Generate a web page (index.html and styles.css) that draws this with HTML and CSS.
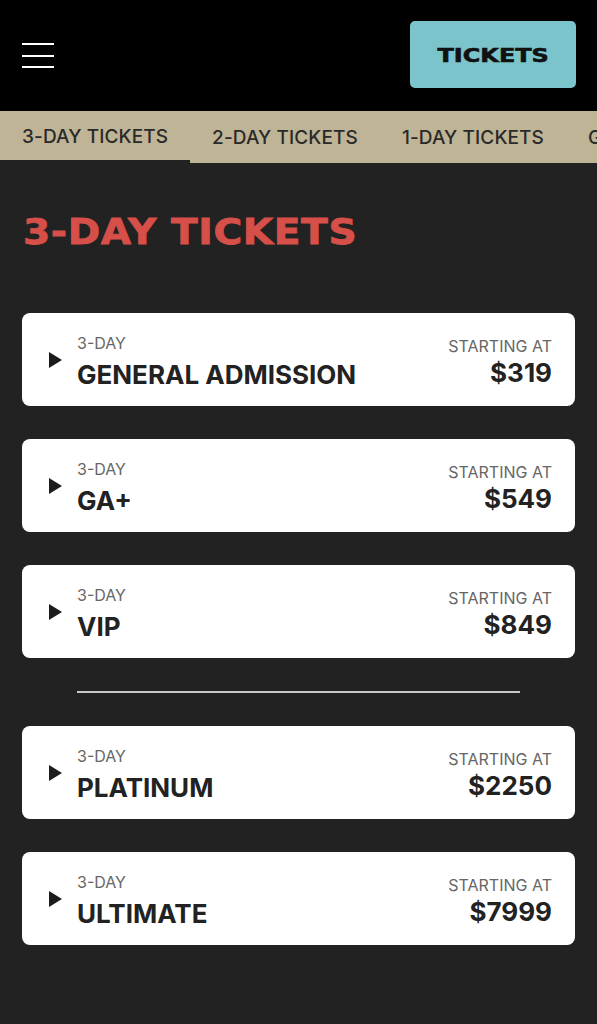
FILE: index.html
```html
<!DOCTYPE html>
<html lang="en">
<head>
    <meta charset="UTF-8">
    <meta name="viewport" content="width=device-width, initial-scale=1.0">
    <title>Tickets</title>
    <link rel="stylesheet" href="styles.css">
</head>
<body>
    <header class="top-bar">
        <button class="menu-btn" aria-label="Menu">
            <span></span><span></span><span></span>
        </button>
        <a class="tickets-btn" href="#"><span>TICKETS</span></a>
    </header>

    <nav class="tabs">
        <a class="tab active" href="#">3-DAY TICKETS</a>
        <a class="tab" href="#">2-DAY TICKETS</a>
        <a class="tab" href="#">1-DAY TICKETS</a>
        <a class="tab" href="#">GA+ ADD-ONS</a>
    </nav>

    <main class="content">
        <h1 class="section-title"><span>3-DAY TICKETS</span></h1>

        <div class="ticket-list">
            <div class="ticket">
                <span class="arrow"></span>
                <div class="ticket-name">
                    <div class="ticket-type">3-DAY</div>
                    <div class="ticket-title">GENERAL ADMISSION</div>
                </div>
                <div class="ticket-price">
                    <div class="price-label">STARTING AT</div>
                    <div class="price-value">$319</div>
                </div>
            </div>

            <div class="ticket">
                <span class="arrow"></span>
                <div class="ticket-name">
                    <div class="ticket-type">3-DAY</div>
                    <div class="ticket-title">GA+</div>
                </div>
                <div class="ticket-price">
                    <div class="price-label">STARTING AT</div>
                    <div class="price-value">$549</div>
                </div>
            </div>

            <div class="ticket">
                <span class="arrow"></span>
                <div class="ticket-name">
                    <div class="ticket-type">3-DAY</div>
                    <div class="ticket-title">VIP</div>
                </div>
                <div class="ticket-price">
                    <div class="price-label">STARTING AT</div>
                    <div class="price-value">$849</div>
                </div>
            </div>

            <hr class="divider">

            <div class="ticket">
                <span class="arrow"></span>
                <div class="ticket-name">
                    <div class="ticket-type">3-DAY</div>
                    <div class="ticket-title">PLATINUM</div>
                </div>
                <div class="ticket-price">
                    <div class="price-label">STARTING AT</div>
                    <div class="price-value">$2250</div>
                </div>
            </div>

            <div class="ticket">
                <span class="arrow"></span>
                <div class="ticket-name">
                    <div class="ticket-type">3-DAY</div>
                    <div class="ticket-title">ULTIMATE</div>
                </div>
                <div class="ticket-price">
                    <div class="price-label">STARTING AT</div>
                    <div class="price-value">$7999</div>
                </div>
            </div>
        </div>
    </main>
</body>
</html>
```

FILE: styles.css
```css
body { margin: 0; background: #222222; font-family: Inter, "Noto Sans", sans-serif; color: #222; }

.top-bar { background: #000; height: 111px; display: flex; align-items: center; justify-content: space-between; padding: 0 22px; box-sizing: border-box; }
.menu-btn { background: none; border: none; padding: 0; width: 32px; height: 25px; display: flex; flex-direction: column; justify-content: space-between; cursor: pointer; }
.menu-btn span { display: block; height: 2px; background: #fff; }
.tickets-btn { background: #7bc4cc; color: #111; text-decoration: none; width: 166px; height: 67px; border-radius: 5px; display: flex; align-items: center; justify-content: center; font-family: "DejaVu Sans", sans-serif; font-weight: bold; font-size: 19px; margin-right: -1px; margin-top: -2px; }
.tickets-btn span { display: inline-block; transform: scaleX(1.26); -webkit-text-stroke: 0.6px #111; }

.tabs { background: #bfb496; height: 52px; display: flex; overflow: hidden; white-space: nowrap; }
.tab { flex: none; color: #2a2a2a; text-decoration: none; font-size: 19px; font-weight: 500; letter-spacing: 0.1px; padding: 0 22px; display: flex; align-items: center; box-sizing: border-box; height: 52px; }
.tab.active { border-bottom: 3px solid #222; padding-top: 1px; }

.content { padding: 0 22px 40px; }
.section-title { margin: 0; padding: 51px 0 63px 1px; color: #d64f49; font-family: "DejaVu Sans", sans-serif; font-weight: bold; font-size: 35px; line-height: 36px; }
.section-title span { display: inline-block; transform: scaleX(1.12); transform-origin: left center; letter-spacing: 0.5px; -webkit-text-stroke: 0.8px #d64f49; }

.ticket-list { display: flex; flex-direction: column; gap: 33px; }
.ticket { background: #fff; border-radius: 8px; height: 93px; display: flex; align-items: center; padding: 0 23px 0 27px; box-sizing: border-box; }
.arrow { width: 0; height: 0; border-top: 8px solid transparent; border-bottom: 8px solid transparent; border-left: 13px solid #1c1c1c; margin-right: 15px; margin-top: 0; }
.ticket-name { flex: 1; padding-top: 4px; }
.ticket-type { font-size: 16px; color: #666; line-height: 18px; }
.ticket-title { font-size: 26px; font-weight: bold; color: #222; line-height: 28px; margin-top: 9px; }
.ticket-price { text-align: right; padding-top: 5px; }
.price-label { font-size: 16px; color: #666; line-height: 18px; }
.price-value { font-size: 26px; font-weight: bold; color: #222; line-height: 30px; margin-top: 3px; }

.divider { border: none; height: 2px; background: #c8c8c8; margin: 0 55px; }
```
